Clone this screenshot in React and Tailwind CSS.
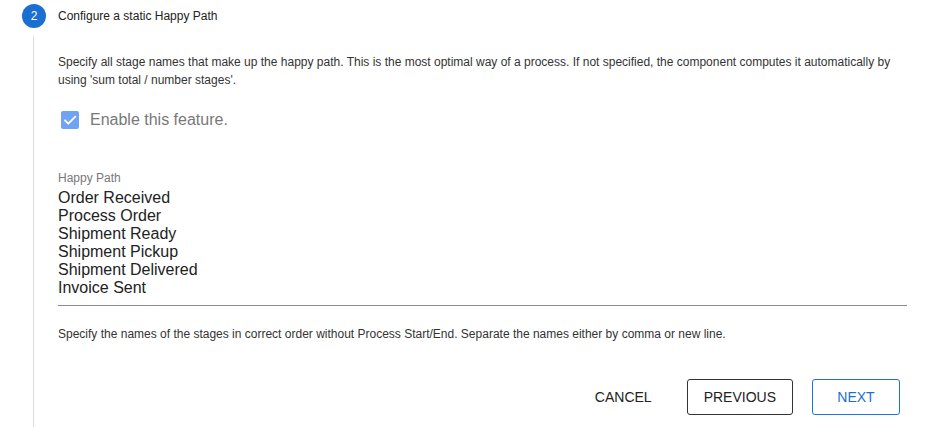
import React from 'react';

const stages = [
  'Order Received',
  'Process Order',
  'Shipment Ready',
  'Shipment Pickup',
  'Shipment Delivered',
  'Invoice Sent',
];

export default function App() {
  return (
    <div className="w-[930px] h-[427px] overflow-hidden bg-white font-['Liberation_Sans',Arial,sans-serif] text-[#333]">
      {/* step header */}
      <div className="flex items-center h-[24px] mt-[4px] pl-[22px]">
        <div className="w-[24px] h-[24px] rounded-full bg-[#1a6fd1] text-white text-[12px] flex items-center justify-center">
          2
        </div>
        <span className="ml-[12px] text-[12px] text-[#212121]">Configure a static Happy Path</span>
      </div>

      {/* step body */}
      <div className="ml-[33px] mt-[8px] border-l border-[#dcdcdc] pl-[24px] pr-[23px] pt-[17px] h-[400px]">
        <p className="text-[12px] leading-[18px] text-[#333]">
          Specify all stage names that make up the happy path. This is the most optimal way of a process. If not specified, the component computes it automatically by using 'sum total / number stages'.
        </p>

        <div className="flex items-center h-[24px] mt-[19px] pl-[3px]">
          <span className="w-[18px] h-[18px] rounded-[2px] bg-[#70a3f1] flex items-center justify-center">
            <svg width="16" height="16" viewBox="0 0 24 24" fill="none">
              <path d="M4.5 12.5l5 5L20 7" stroke="white" strokeWidth="2.8" strokeLinecap="round" strokeLinejoin="round" />
            </svg>
          </span>
          <span className="ml-[11px] text-[16px] text-[#787878]">Enable this feature.</span>
        </div>

        <div className="mt-[39px]">
          <div className="text-[12px] leading-[14px] text-[#787878]">Happy Path</div>
          <div className="mt-[4px] pb-[8px] border-b border-[#8c8c8c] text-[16px] leading-[18px] text-[#222]">
            {stages.map((s) => (
              <div key={s}>{s}</div>
            ))}
          </div>
          <p className="mt-[21px] text-[12px] leading-[14px] text-[#333]">
            Specify the names of the stages in correct order without Process Start/End. Separate the names either by comma or new line.
          </p>
        </div>

        <div className="flex justify-end items-center gap-[19px] mt-[38px] mr-[7px]">
          <button className="h-[36px] px-[16px] text-[14px] text-[#222]">CANCEL</button>
          <button className="h-[36px] px-[16px] border border-[#333] rounded-[3px] text-[14px] text-[#222]">PREVIOUS</button>
          <button className="h-[36px] min-w-[88px] px-[16px] border border-[#1a73e8] rounded-[3px] text-[14px] text-[#1a6fd1]">NEXT</button>
        </div>
      </div>
    </div>
  );
}
